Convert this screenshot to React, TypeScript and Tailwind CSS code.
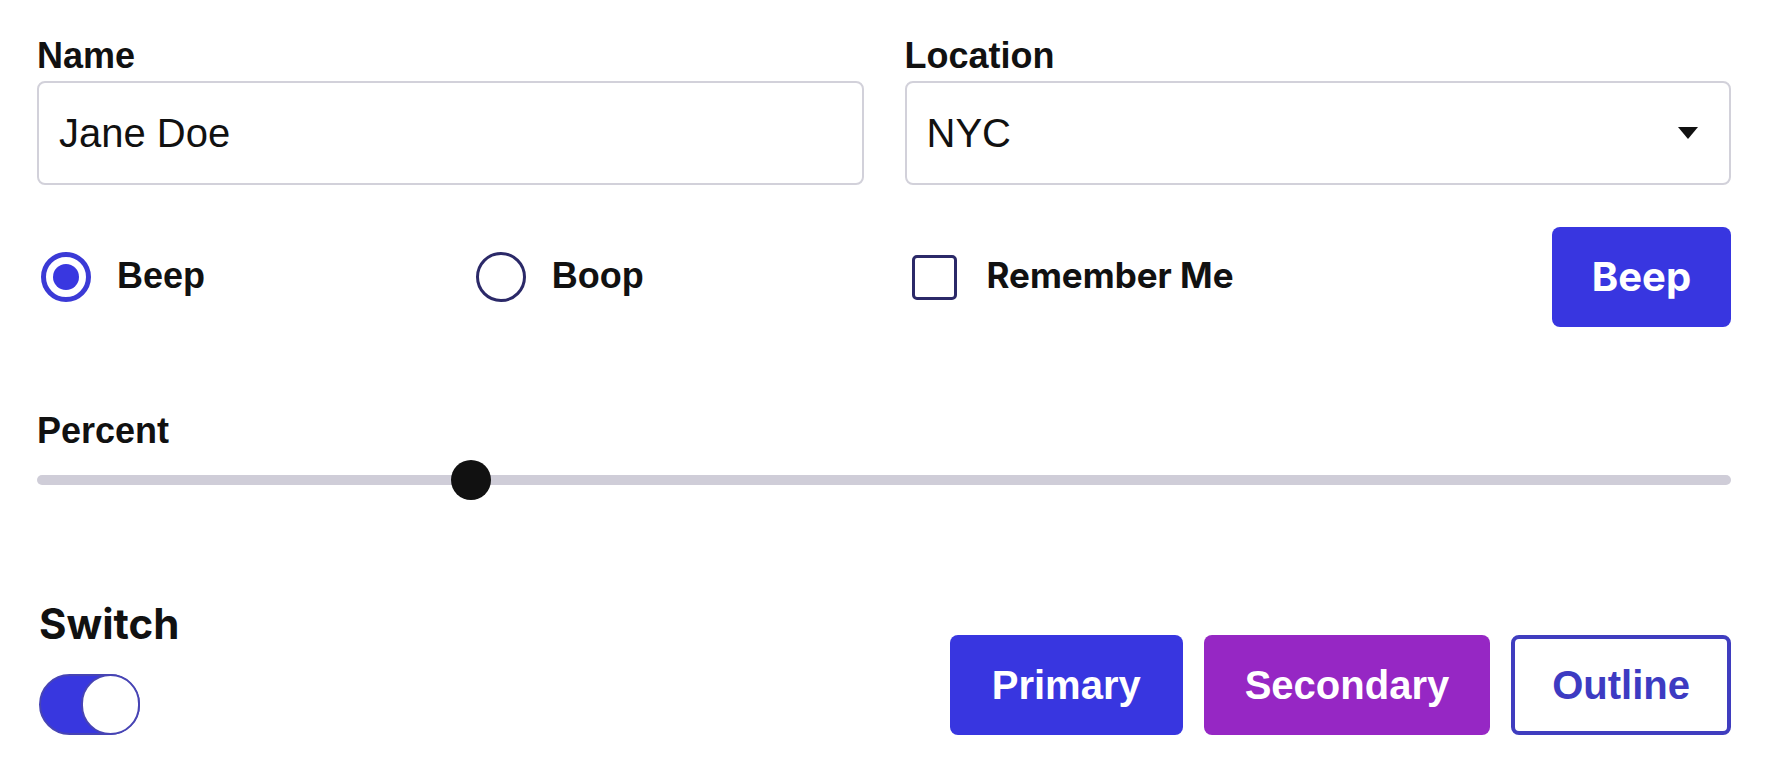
import React from "react";

const arial = { fontFamily: '"Liberation Sans", Arial, sans-serif' };
const inter = { fontFamily: 'Inter, "Liberation Sans", sans-serif' };

const Label = ({ children }: { children: React.ReactNode }) => (
    <div className="h-[34px] text-[36px] leading-none font-bold text-[#111]" style={arial}>
        {children}
    </div>
);

const Radio = ({ label, checked, offset }: { label: string; checked?: boolean; offset: string }) => (
    <div className={`flex items-center gap-[26px] ${offset}`}>
        {checked ? (
            <div className="flex h-[50px] w-[50px] items-center justify-center rounded-full border-[5px] border-[#3b3ad6]">
                <div className="h-[26px] w-[26px] rounded-full bg-[#3937e0]" />
            </div>
        ) : (
            <div className="h-[50px] w-[50px] rounded-full border-[3px] border-[#2b2968]" />
        )}
        <span className="-mt-[3px] text-[36px] font-bold text-[#111]" style={arial}>
            {label}
        </span>
    </div>
);

export default function App() {
    const percent = 25;

    return (
        <div className="min-h-screen bg-white px-[37px] pt-[38px]">
            <div className="grid grid-cols-2 gap-x-[41px]">
                <div>
                    <Label>Name</Label>
                    <input
                        defaultValue="Jane Doe"
                        className="mt-[9px] h-[104px] w-full rounded-[8px] border-2 border-[#d2d1da] px-[20px] text-[40px] text-[#111] outline-none"
                        style={arial}
                    />
                </div>
                <div>
                    <Label>Location</Label>
                    <div
                        className="mt-[9px] flex h-[104px] w-full items-center justify-between rounded-[8px] border-2 border-[#d2d1da] pl-[20px] pr-[31px] text-[40px] text-[#111]"
                        style={arial}
                    >
                        <span>NYC</span>
                        <svg width="20" height="12" viewBox="0 0 20 12">
                            <path d="M0 0 H20 L10 12 Z" fill="#111" />
                        </svg>
                    </div>
                </div>
            </div>

            <div className="mt-[42px] grid h-[100px] grid-cols-4 items-center gap-x-[41px]">
                <Radio label="Beep" checked offset="ml-[4px]" />
                <Radio label="Boop" offset="ml-[5px]" />
                <div className="ml-[7px] flex items-center gap-[30px]">
                    <div className="h-[45px] w-[45px] rounded-[5px] border-[3px] border-[#2b2968]" />
                    <span className="-mt-[3px] text-[35px] font-bold text-[#111]" style={inter}>
                        Remember Me
                    </span>
                </div>
                <button
                    className="h-[100px] w-[179px] justify-self-end rounded-[8px] bg-[#3836e0] text-[40px] font-bold text-white"
                    style={inter}
                >
                    Beep
                </button>
            </div>

            <div className="mt-[86px]">
                <Label>Percent</Label>
                <div className="relative mt-[13px] flex h-[40px] items-center">
                    <div className="h-[10px] w-full rounded-full bg-[#cfcdd8]" />
                    <div
                        className="absolute top-0 h-[40px] w-[40px] rounded-full bg-[#111]"
                        style={{ left: `calc(${percent / 100} * (100% - 40px))` }}
                    />
                </div>
            </div>

            <div className="mt-[103px] flex items-end justify-between">
                <div className="ml-[2px]">
                    <div className="h-[42px] text-[42px] leading-none font-bold text-[#111]" style={inter}>
                        Switch
                    </div>
                    <div className="mt-[29px] flex h-[61px] w-[101px] justify-end rounded-full border-2 border-[#4744b4] bg-[#3837df]">
                        <div className="-my-[2px] -mr-[2px] h-[61px] w-[59px] rounded-full border-2 border-[#4744b4] bg-white" />
                    </div>
                </div>
                <div className="flex gap-[21px]" style={arial}>
                    <button className="h-[100px] rounded-[8px] bg-[#3836e0] px-[42px] text-[40px] font-bold text-white">
                        Primary
                    </button>
                    <button className="h-[100px] rounded-[8px] bg-[#9627c4] px-[41px] text-[40px] font-bold text-white">
                        Secondary
                    </button>
                    <button className="h-[100px] rounded-[8px] border-[4px] border-[#3f3dbf] bg-white px-[37px] text-[40px] font-bold text-[#3d3bc2]">
                        Outline
                    </button>
                </div>
            </div>
        </div>
    );
}
